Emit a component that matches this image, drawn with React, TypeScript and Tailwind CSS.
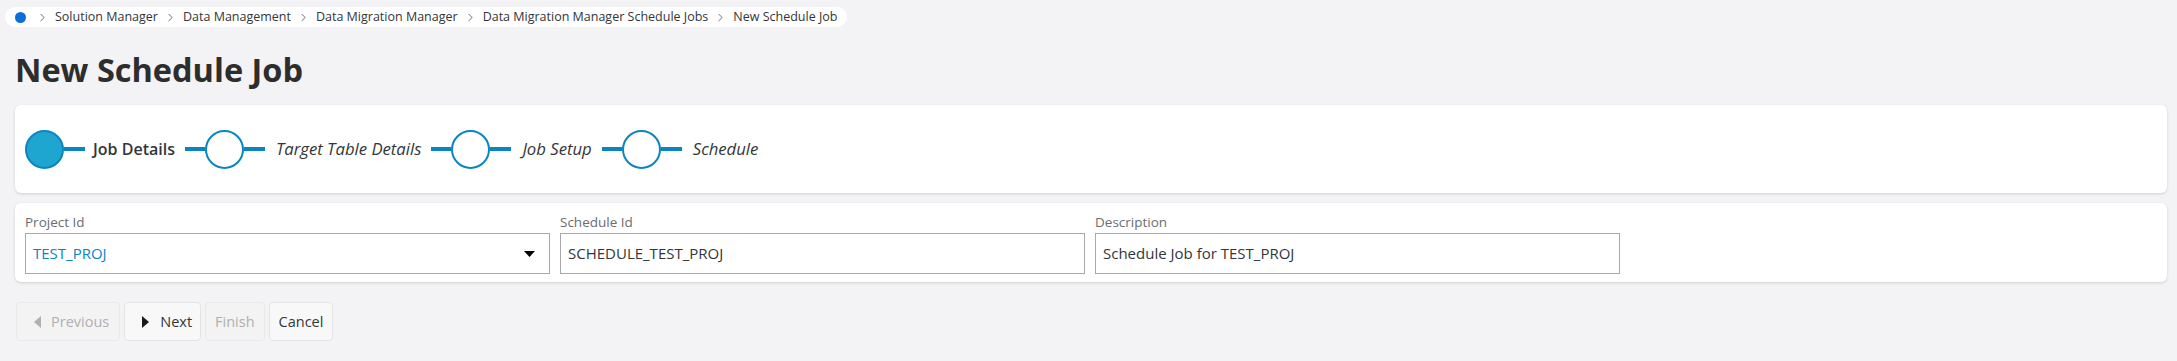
import { ChevronRight } from 'lucide-react'

const crumbs = ['Solution Manager', 'Data Management', 'Data Migration Manager', 'Data Migration Manager Schedule Jobs', 'New Schedule Job']

const steps = [
    { label: 'Job Details', active: true },
    { label: 'Target Table Details', active: false },
    { label: 'Job Setup', active: false },
    { label: 'Schedule', active: false },
]

const fields = [
    { label: 'Project Id', value: 'TEST_PROJ', select: true },
    { label: 'Schedule Id', value: 'SCHEDULE_TEST_PROJ', select: false },
    { label: 'Description', value: 'Schedule Job for TEST_PROJ', select: false },
]

const CaretLeft = ({ color }: { color: string }) => (
    <svg width="8" height="12" viewBox="0 0 8 12"><path d="M7 0 L0 6 L7 12 Z" fill={color} /></svg>
)

const CaretRight = ({ color }: { color: string }) => (
    <svg width="8" height="12" viewBox="0 0 8 12"><path d="M0 0 L7 6 L0 12 Z" fill={color} /></svg>
)

const App = () => {
    return (
        <div className="min-h-[361px] w-full bg-[#f3f2f5] text-[#32363a]" style={{ fontFamily: '"Open Sans", "Liberation Sans", sans-serif' }}>
            {/* breadcrumb */}
            <div className="flex pl-[5px] pt-[7px]">
                <div className="flex h-[20px] items-center rounded-full bg-white pl-[10px] pr-[10px] text-[12.5px] leading-[20px] text-[#32363a]">
                    <span className="mr-[4px] h-[11px] w-[11px] rounded-full bg-[#0a6fd6]" />
                    {crumbs.map((c) => (
                        <div key={c} className="flex items-center">
                            <ChevronRight size={13} strokeWidth={1.5} className="mx-[6px] text-[#4a4d50]" />
                            <span>{c}</span>
                        </div>
                    ))}
                </div>
            </div>

            {/* title */}
            <h1 className="mt-[23px] pl-[15px] text-[32.5px] font-bold leading-[40px] text-[#2d2d2d]">New Schedule Job</h1>

            {/* stepper */}
            <div className="mr-[10px] ml-[15px] mt-[15px] flex h-[88px] items-center rounded-[6px] bg-white px-[10px] shadow-[0_1px_3px_rgba(0,0,0,0.15)]">
                {steps.map((s, i) => (
                    <div key={s.label} className="flex items-center">
                        {i > 0 && <div className="h-[4px] w-[20px] bg-[#0a85c2]" />}
                        <div className={`h-[39px] w-[39px] rounded-full border-2 border-[#0a85c2] ${s.active ? 'bg-[#1fa6d0]' : 'bg-white'}`} />
                        <div className="h-[4px] w-[21px] bg-[#0a85c2]" />
                        {s.active ? (
                            <span className="ml-[8px] mr-[10px] text-[16px] font-semibold">{s.label}</span>
                        ) : (
                            <span className="ml-[11px] mr-[10px] text-[16.7px] italic">{s.label}</span>
                        )}
                    </div>
                ))}
            </div>

            {/* form */}
            <div className="mr-[10px] ml-[15px] mt-[10px] flex gap-[10px] rounded-[6px] bg-white px-[10px] pb-[8px] pt-[9px] shadow-[0_1px_3px_rgba(0,0,0,0.15)]">
                {fields.map((f) => (
                    <div key={f.label} className="w-[525px]">
                        <div className="h-[21px] text-[13.5px] leading-[20px] text-[#6a6d70]">{f.label}</div>
                        {f.select ? (
                            <div className="flex h-[41px] items-center justify-between border border-[#a9a9a9] pl-[7px] pr-[14px] text-[15px]">
                                <span className="text-[#0a85c2]">{f.value}</span>
                                <svg width="11" height="6" viewBox="0 0 11 6"><path d="M0 0 L11 0 L5.5 6 Z" fill="#000" /></svg>
                            </div>
                        ) : (
                            <div className="flex h-[41px] items-center border border-[#a9a9a9] px-[7px] text-[15px]">{f.value}</div>
                        )}
                    </div>
                ))}
            </div>

            {/* buttons */}
            <div className="ml-[16px] mt-[20px] flex gap-[4px] text-[14.5px]">
                <button className="flex h-[39px] items-center gap-[9px] rounded-[4px] border border-[#e9e9ea] bg-[#f3f3f4] pl-[17px] pr-[10px] text-[#b0b0b0]">
                    <CaretLeft color="#b0b0b0" />
                    Previous
                </button>
                <button className="flex h-[39px] items-center gap-[10px] rounded-[4px] border border-[#e4e4e4] bg-[#f8f8f8] pl-[17px] pr-[8px] text-[#32363a]">
                    <CaretRight color="#1a1a1a" />
                    Next
                </button>
                <button className="flex h-[39px] items-center rounded-[4px] border border-[#e9e9ea] bg-[#f3f3f4] px-[9px] text-[#b0b0b0]">Finish</button>
                <button className="flex h-[39px] items-center rounded-[4px] border border-[#e4e4e4] bg-[#f8f8f8] px-[9px] text-[#32363a]">Cancel</button>
            </div>
        </div>
    )
}

export default App
